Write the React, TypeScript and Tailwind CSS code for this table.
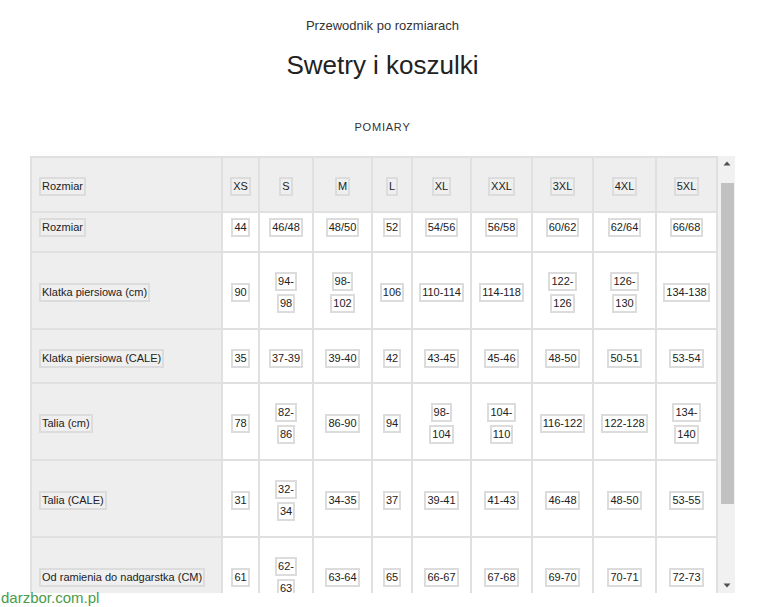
import React, { useLayoutEffect, useRef } from 'react';

type Cell = string | string[];

interface Row {
  label: string;
  tall?: boolean;
  values: Cell[];
}

const sizes = ['XS', 'S', 'M', 'L', 'XL', 'XXL', '3XL', '4XL', '5XL'];

const rows: Row[] = [
  { label: 'Rozmiar', values: ['44', '46/48', '48/50', '52', '54/56', '56/58', '60/62', '62/64', '66/68'] },
  {
    label: 'Klatka piersiowa (cm)',
    tall: true,
    values: ['90', ['94-', '98'], ['98-', '102'], '106', '110-114', '114-118', ['122-', '126'], ['126-', '130'], '134-138'],
  },
  { label: 'Klatka piersiowa (CALE)', values: ['35', '37-39', '39-40', '42', '43-45', '45-46', '48-50', '50-51', '53-54'] },
  {
    label: 'Talia (cm)',
    tall: true,
    values: ['78', ['82-', '86'], '86-90', '94', ['98-', '104'], ['104-', '110'], '116-122', '122-128', ['134-', '140']],
  },
  { label: 'Talia (CALE)', tall: true, values: ['31', ['32-', '34'], '34-35', '37', '39-41', '41-43', '46-48', '48-50', '53-55'] },
  {
    label: 'Od ramienia do nadgarstka (CM)',
    tall: true,
    values: ['61', ['62-', '63'], '63-64', '65', '66-67', '67-68', '69-70', '70-71', '72-73'],
  },
];

const cols = 'grid grid-cols-[189px_35px_52px_57px_38px_57px_59px_59px_61px_59px] gap-x-[2px]';

// little highlighted label around every text line
const Tag: React.FC<{ text: string; grey?: boolean }> = ({ text, grey }) => (
  <span
    className={`inline-block whitespace-nowrap border-2 border-[#dcdcdc] px-px py-px leading-[13px] ${
      grey ? 'bg-[#efefef]' : 'bg-white'
    }`}
  >
    {text}
  </span>
);

const CellBox: React.FC<{ value: Cell; first?: boolean; grey?: boolean }> = ({ value, first, grey }) => {
  const lines = Array.isArray(value) ? value : [value];
  return (
    <div
      className={`flex flex-col justify-center gap-[3px] pt-[4px] text-[11px] ${
        first ? 'items-start pl-[7px]' : 'items-center'
      } ${grey ? 'bg-[#eeeeee]' : 'bg-white'}`}
    >
      {lines.map((l) => (
        <Tag key={l} text={l} grey={grey} />
      ))}
    </div>
  );
};

const Arrow: React.FC<{ down?: boolean }> = ({ down }) => (
  <div className="h-[15px] flex items-center justify-center">
    <svg width="8" height="5" viewBox="0 0 8 5">
      <path d={down ? 'M0.5 0.5 L7.5 0.5 L4 4.5 Z' : 'M0.5 4.5 L7.5 4.5 L4 0.5 Z'} fill="#505050" />
    </svg>
  </div>
);

export default function App() {
  const bodyRef = useRef<HTMLDivElement>(null);

  useLayoutEffect(() => {
    if (bodyRef.current) bodyRef.current.scrollTop = 14;
  }, []);

  return (
    <div className="relative w-[773px] h-[607px] overflow-hidden bg-white text-[#222] font-['Liberation_Sans',Arial,sans-serif]">
      <div className="pl-[30px] pr-[38px] flex flex-col items-center">
        <p className="mt-[17px] text-[13px] leading-[18px] text-[#333]">Przewodnik po rozmiarach</p>
        <h1 className="mt-[14px] text-[26px] leading-[32px] text-[#222]">Swetry i koszulki</h1>
        <h2 className="mt-[39px] text-[11px] leading-[14px] tracking-[0.8px] text-[#333]">POMIARY</h2>

        <div className="mt-[22px] flex h-[437px] w-[705px]">
          <div className="w-[688px] flex flex-col bg-[#e0e0e0] pt-[2px] px-[2px]">
            <div className={`${cols} h-[53px]`}>
              <CellBox value="Rozmiar" first grey />
              {sizes.map((s) => (
                <CellBox key={s} value={s} grey />
              ))}
            </div>
            <div ref={bodyRef} className="mt-[2px] flex-1 overflow-hidden">
              <div className="flex flex-col gap-y-[2px]">
                {rows.map((r) => (
                  <div key={r.label} className={`${cols} ${r.tall ? 'h-[75px]' : 'h-[52px]'}`}>
                    <CellBox value={r.label} first grey />
                    {r.values.map((v, i) => (
                      <CellBox key={i} value={v} />
                    ))}
                  </div>
                ))}
              </div>
            </div>
          </div>

          {/* scrollbar */}
          <div className="w-[17px] flex flex-col bg-[#f1f1f1]">
            <Arrow />
            <div className="flex-1">
              <div className="mt-[12px] ml-[3px] w-[13px] h-[321px] bg-[#c1c1c1]" />
            </div>
            <Arrow down />
          </div>
        </div>
      </div>

      <span className="absolute left-[1px] bottom-[1px] text-[15px] leading-[17px] text-[#4a9b4a] font-['Liberation_Sans',Arial,sans-serif]">
        darzbor.com.pl
      </span>
    </div>
  );
}
